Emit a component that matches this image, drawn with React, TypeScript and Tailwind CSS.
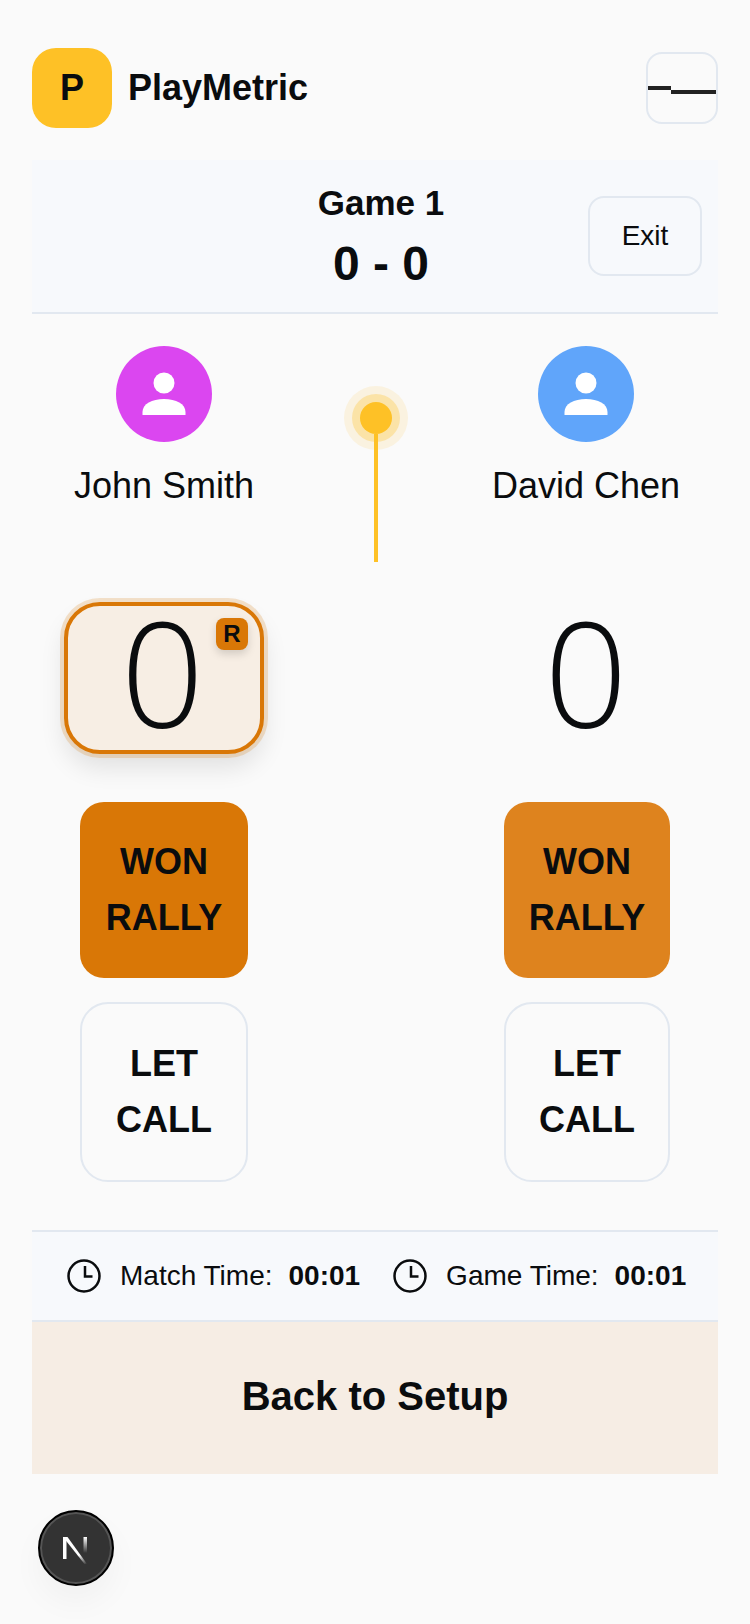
function PersonIcon() {
  return (
    <svg width="48" height="48" viewBox="0 0 48 48" fill="white">
      <circle cx="24" cy="13" r="10.5" />
      <path d="M2.5 45v-3C2.5 34 12 29 24 29s21.500 5 21.500 13v3z" />
    </svg>
  );
}

function ClockIcon() {
  return (
    <svg width="34" height="34" viewBox="0 0 34 34" fill="none" stroke="#0a0c0e" strokeWidth="2.500">
      <circle cx="17" cy="17" r="15.500" />
      <path d="M18 7v10.500h7.500" />
    </svg>
  );
}

function NextLogo() {
  return (
    <svg width="34" height="34" viewBox="0 0 34 34" fill="none">
      <defs>
        <linearGradient id="n-diag" x1="12" y1="8" x2="28" y2="33" gradientUnits="userSpaceOnUse">
          <stop offset="0.6" stopColor="white" />
          <stop offset="1" stopColor="white" stopOpacity="0" />
        </linearGradient>
        <linearGradient id="n-right" x1="24" y1="6" x2="24" y2="22" gradientUnits="userSpaceOnUse">
          <stop stopColor="white" />
          <stop offset="1" stopColor="white" stopOpacity="0" />
        </linearGradient>
      </defs>
      <path d="M4 6h3.500v22H4z" fill="white" />
      <path d="M4 6h4.500L28 33h-2.500z" fill="url(#n-diag)" />
      <path d="M24.500 6H28v16h-3.500z" fill="url(#n-right)" />
    </svg>
  );
}

function Player({ name, color }: { name: string; color: string }) {
  return (
    <div className="flex flex-col items-center">
      <div className={`flex h-24 w-24 items-center justify-center rounded-full ${color}`}>
        <PersonIcon />
      </div>
      <div className="mt-[22px] text-[36px] leading-[44px]">{name}</div>
    </div>
  );
}

function ActionButtons({ wonColor, width }: { wonColor: string; width: string }) {
  return (
    <div className="mt-[48px] flex flex-col items-center gap-6">
      <button className={`h-[176px] rounded-[24px] text-[36px] font-bold leading-[56px] text-[#0a0c0e] ${width} ${wonColor}`}>
        WON
        <br />
        RALLY
      </button>
      <button className={`h-[180px] rounded-[28px] border-2 border-[#e2e8f0] text-[36px] font-bold leading-[56px] text-[#0a0c0e] ${width}`}>
        LET
        <br />
        CALL
      </button>
    </div>
  );
}

export default function App() {
  return (
    <div className="min-h-[1624px] bg-[#fafafa] px-8 pt-12 font-['Liberation_Sans',Arial,sans-serif] text-[#0a0c0e]">
      <header className="flex items-center justify-between">
        <div className="flex items-center gap-4">
          <div className="flex h-20 w-20 items-center justify-center rounded-[24px] bg-[#fec126] text-[36px] font-bold">P</div>
          <div className="text-[36px] font-bold">PlayMetric</div>
        </div>
        <button className="flex h-[72px] w-[72px] flex-col rounded-[16px] border-2 border-[#e2e8f0]">
          <span className="mt-[32px] flex w-full items-start">
            <span className="h-1 w-[23px] bg-[#222]" />
            <span className="mt-1 h-1 flex-1 bg-[#222]" />
          </span>
        </button>
      </header>

      <section className="mt-8 flex h-[154px] items-center justify-between border-b-2 border-[#e2e8f0] bg-[#f7f9fc] pl-4 pr-4">
        <div className="w-[126px]" />
        <div className="flex flex-col items-center pt-[3px]">
          <div className="text-[35px] font-bold leading-[44px]">Game 1</div>
          <div className="mt-[9px] text-[48px] font-bold leading-[60px]">0 - 0</div>
        </div>
        <button className="h-20 w-[114px] rounded-[16px] border-2 border-[#e2e8f0] text-[28px]">Exit</button>
      </section>

      <section className="grid grid-cols-[264px_1fr_264px] pt-8">
        <div className="flex flex-col items-center">
          <Player name="John Smith" color="bg-[#db46f0]" />
          <div className="relative mt-[94px] flex h-[152px] w-[200px] items-center justify-center rounded-[36px] border-4 border-[#d97706] bg-[#f7eee4] pb-[12px] pr-[3px] shadow-[0_0_0_4px_rgba(217,119,6,0.2),0_14px_24px_rgba(0,0,0,0.1)]">
            <span className="font-['Open_Sans',sans-serif] text-[146px] font-light leading-none">0</span>
            <span className="absolute right-[12px] top-[12px] flex h-8 w-8 items-center justify-center rounded-[8px] bg-[#d97706] text-[24px] font-bold shadow-[0_4px_8px_rgba(0,0,0,0.15)]">R</span>
          </div>
          <ActionButtons wonColor="bg-[#d97706]" width="w-[168px]" />
        </div>

        <div className="flex flex-col items-center pl-[2px] pt-[56px]">
          <div className="relative h-8 w-8 rounded-full bg-[#fec126] shadow-[0_0_0_8px_rgba(254,193,38,0.3),0_0_0_16px_rgba(254,193,38,0.12)]">
            <div className="absolute left-[14px] top-8 h-[128px] w-1 bg-[#fec126]" />
          </div>
        </div>

        <div className="flex flex-col items-center">
          <Player name="David Chen" color="bg-[#60a5fa]" />
          <div className="mt-[94px] flex h-[152px] w-[200px] items-center justify-center pb-[12px]">
            <span className="font-['Open_Sans',sans-serif] text-[146px] font-light leading-none">0</span>
          </div>
          <ActionButtons wonColor="bg-[#de831e]" width="ml-[2px] w-[166px]" />
        </div>
      </section>

      <section className="mt-[48px] flex h-[92px] items-center border-y-2 border-[#e2e8f0] bg-[#f7f9fc] pl-[35px] text-[28px]">
        <ClockIcon />
        <span className="ml-[19px]">Match Time:</span>
        <span className="ml-4 font-bold">00:01</span>
        <span className="ml-[33px]"><ClockIcon /></span>
        <span className="ml-[19px]">Game Time:</span>
        <span className="ml-4 font-bold">00:01</span>
      </section>

      <button className="block h-[152px] w-full bg-[#f6ede4] pb-1 text-[40px] font-bold">Back to Setup</button>

      <div className="mt-9 ml-[6px] flex h-[76px] w-[76px] items-center justify-center rounded-full border-2 border-black bg-[#333] shadow-[inset_0_0_0_2px_#555,0_16px_32px_rgba(0,0,0,0.04)]">
        <NextLogo />
      </div>
    </div>
  );
}
